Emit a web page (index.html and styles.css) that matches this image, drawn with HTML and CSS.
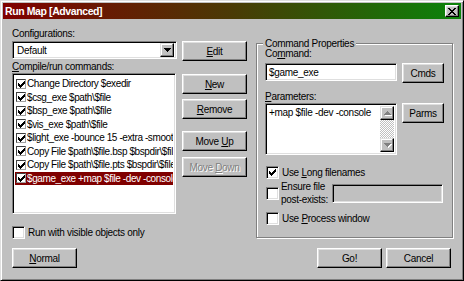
FILE: index.html
```html
<!DOCTYPE html>
<html lang="en">
<head>
    <meta charset="UTF-8">
    <title>Run Map [Advanced]</title>
    <link rel="stylesheet" href="styles.css">
</head>
<body>
    <div class="window">
        <div class="titlebar">
            <span class="title">Run Map [Advanced]</span>
            <button class="close-btn" aria-label="Close">
                <svg width="8" height="7" viewBox="0 0 8 7"><path d="M0 0h2v1H0z M6 0h2v1H6z M1 1h2v1H1z M5 1h2v1H5z M2 2h4v1H2z M3 3h2v1H3z M2 4h4v1H2z M1 5h2v1H1z M5 5h2v1H5z M0 6h2v1H0z M6 6h2v1H6z"/></svg>
            </button>
        </div>

        <div class="main">
            <div class="left-col">
                <div class="label cfg-label">Configurations:</div>
                <div class="cfg-row">
                    <div class="combo sunken">
                        <span class="combo-text">Default</span>
                        <span class="combo-btn">
                            <svg width="7" height="4" viewBox="0 0 7 4"><path d="M0 0h7v1H0z M1 1h5v1H1z M2 2h3v1H2z M3 3h1v1H3z"/></svg>
                        </span>
                    </div>
                    <button class="btn"><u>E</u>dit</button>
                </div>

                <div class="label list-label"><u>C</u>ompile/run commands:</div>
                <div class="list-row">
                    <div class="listbox sunken">
                        <div class="item"><span class="lcheck"></span><span class="item-text">Change Directory $exedir</span></div>
                        <div class="item"><span class="lcheck"></span><span class="item-text">$csg_exe $path\$file</span></div>
                        <div class="item"><span class="lcheck"></span><span class="item-text">$bsp_exe $path\$file</span></div>
                        <div class="item"><span class="lcheck"></span><span class="item-text">$vis_exe $path\$file</span></div>
                        <div class="item"><span class="lcheck"></span><span class="item-text">$light_exe -bounce 15 -extra -smooth</span></div>
                        <div class="item"><span class="lcheck"></span><span class="item-text">Copy File $path\$file.bsp $bspdir\$file.bsp</span></div>
                        <div class="item"><span class="lcheck"></span><span class="item-text">Copy File $path\$file.pts $bspdir\$file.pts</span></div>
                        <div class="item selected"><span class="lcheck"></span><span class="item-text">$game_exe +map $file -dev -console</span></div>
                    </div>
                    <div class="btn-col">
                        <button class="btn"><u>N</u>ew</button>
                        <button class="btn btn-remove"><u>R</u>emove</button>
                        <button class="btn btn-up">Move <u>U</u>p</button>
                        <button class="btn btn-down" disabled>Move <u>D</u>own</button>
                    </div>
                </div>

                <div class="check-row visible-row">
                    <span class="checkbox sunken"></span>
                    <span>Run with visible objects only</span>
                </div>
            </div>

            <fieldset class="group">
                <legend>Command Properties</legend>

                <div class="label cmd-label">Co<u>m</u>mand:</div>
                <div class="field-row">
                    <div class="textbox sunken cmd-box">$game_exe</div>
                    <button class="btn btn-small">Cmds</button>
                </div>

                <div class="label parm-label"><u>P</u>arameters:</div>
                <div class="field-row">
                    <div class="textarea sunken">
                        <div class="textarea-text">+map $file -dev -console</div>
                        <div class="scrollbar">
                            <span class="scroll-btn">
                                <svg width="7" height="4" viewBox="0 0 7 4"><path d="M3 0h1v1H3z M2 1h3v1H2z M1 2h5v1H1z M0 3h7v1H0z"/></svg>
                            </span>
                            <span class="scroll-track"></span>
                            <span class="scroll-btn">
                                <svg width="7" height="4" viewBox="0 0 7 4"><path d="M0 0h7v1H0z M1 1h5v1H1z M2 2h3v1H2z M3 3h1v1H3z"/></svg>
                            </span>
                        </div>
                    </div>
                    <button class="btn btn-small">Parms</button>
                </div>

                <div class="check-row long-row">
                    <span class="checkbox sunken checked"></span>
                    <span>Use <u>L</u>ong filenames</span>
                </div>

                <div class="check-row ensure-row">
                    <span class="checkbox sunken"></span>
                    <span class="ensure-text">Ensure file<br>post-exists:</span>
                    <div class="textbox sunken ensure-box"></div>
                </div>

                <div class="check-row process-row">
                    <span class="checkbox sunken"></span>
                    <span>Use <u>P</u>rocess window</span>
                </div>
            </fieldset>
        </div>

        <div class="footer">
            <button class="btn"><u>N</u>ormal</button>
            <div class="footer-right">
                <button class="btn">Go!</button>
                <button class="btn">Cancel</button>
            </div>
        </div>
    </div>
</body>
</html>
```

FILE: styles.css
```css
* {
    box-sizing: border-box;
}

body {
    margin: 0;
    background: #c0c0c0;
    font-family: "Liberation Sans", Arial, sans-serif;
    font-size: 10px;
    letter-spacing: -0.3px;
    color: #000;
}

u {
    text-underline-offset: 1px;
}

/* window frame */
.window {
    width: 464px;
    height: 281px;
    background: #c0c0c0;
    border: 1px solid;
    border-color: #dfdfdf #000 #000 #dfdfdf;
    box-shadow: inset 1px 1px #fff, inset -1px -1px #808080;
    padding: 2px;
    display: flex;
    flex-direction: column;
}

.titlebar {
    height: 16px;
    background: linear-gradient(to right, #800000, #4a3a05 50%, #0a840a);
    display: flex;
    align-items: center;
    justify-content: space-between;
    padding: 0 2px;
}

.title {
    color: #fff;
    font-weight: bold;
    font-size: 10.5px;
    letter-spacing: -0.4px;
}

.close-btn {
    width: 14px;
    height: 12px;
    padding: 0;
    background: #c0c0c0;
    border: 1px solid;
    border-color: #fff #000 #000 #fff;
    box-shadow: inset -1px -1px #808080, inset 1px 1px #dfdfdf;
    display: flex;
    align-items: center;
    justify-content: center;
}

/* shared control looks */
.sunken {
    background: #fff;
    border: 1px solid;
    border-color: #808080 #fff #fff #808080;
    box-shadow: inset 1px 1px #000, inset -1px -1px #dfdfdf;
}

.btn {
    width: 65px;
    height: 20px;
    padding: 0;
    font: inherit;
    letter-spacing: inherit;
    color: #000;
    background: #c0c0c0;
    border: 1px solid;
    border-color: #fff #000 #000 #fff;
    box-shadow: inset -1px -1px #808080, inset 1px 1px #dfdfdf;
}

.btn:disabled {
    color: #808080;
    text-shadow: 1px 1px #fff;
}

.label {
    line-height: 12px;
    white-space: nowrap;
}

/* main area */
.main {
    display: flex;
    align-items: flex-start;
    gap: 9px;
    padding: 8px 0 0 9px;
}

.left-col {
    width: 235px;
}

.cfg-label {
    line-height: 14px;
}

.cfg-row {
    display: flex;
    gap: 5px;
}

.combo {
    width: 165px;
    height: 18px;
    display: flex;
    align-items: center;
    justify-content: space-between;
    padding: 2px;
}

.combo-text {
    padding-left: 2px;
}

.combo-btn {
    width: 14px;
    height: 14px;
    background: #c0c0c0;
    border: 1px solid;
    border-color: #dfdfdf #000 #000 #dfdfdf;
    box-shadow: inset -1px -1px #808080, inset 1px 1px #fff;
    display: flex;
    align-items: center;
    justify-content: center;
}

.list-row {
    display: flex;
    gap: 6px;
}

.listbox {
    width: 164px;
    height: 141px;
    padding: 3px 2px 2px 2px;
    overflow: hidden;
    letter-spacing: -0.4px;
}

.item {
    height: 13.5px;
    display: flex;
    align-items: center;
    white-space: nowrap;
    padding-left: 1px;
}

.item-text {
    flex: 1;
    min-width: 0;
    overflow: hidden;
}

.item.selected {
    background: #800000;
    color: #fff;
}

.lcheck {
    flex: none;
    width: 10px;
    height: 10px;
    margin-right: 1px;
    background: #fff url("data:image/svg+xml,%3Csvg xmlns='http://www.w3.org/2000/svg' width='7' height='7'%3E%3Cpath d='M6 0h1v1H6z M5 1h2v1H5z M0 2h1v1H0z M4 2h3v1H4z M0 3h2v1H0z M3 3h3v1H3z M0 4h5v1H0z M1 5h3v1H1z M2 6h1v1H2z'/%3E%3C/svg%3E") no-repeat 1px 1px;
    border: 1px solid;
    border-color: #404040 #a0a0a0 #a0a0a0 #404040;
}

.btn-col {
    display: flex;
    flex-direction: column;
    padding-top: 1px;
}

.btn-remove {
    margin-top: 5px;
}

.btn-up {
    margin-top: 12px;
}

.btn-down {
    margin-top: 6px;
}

/* check boxes */
.check-row {
    display: flex;
    align-items: center;
    gap: 3px;
    white-space: nowrap;
}

.checkbox {
    flex: none;
    width: 13px;
    height: 13px;
}

.checkbox.checked {
    background: #fff url("data:image/svg+xml,%3Csvg xmlns='http://www.w3.org/2000/svg' width='7' height='7'%3E%3Cpath d='M6 0h1v1H6z M5 1h2v1H5z M0 2h1v1H0z M4 2h3v1H4z M0 3h2v1H0z M3 3h3v1H3z M0 4h5v1H0z M1 5h3v1H1z M2 6h1v1H2z'/%3E%3C/svg%3E") no-repeat 2px 2px;
}

.visible-row {
    margin-top: 12px;
    height: 13px;
}

/* group box */
.group {
    width: 197px;
    margin: 11px 0 0 0;
    padding: 0 8px 12px 8px;
    border: 1px solid #808080;
    box-shadow: inset 1px 1px #fff, 1px 1px #fff;
    min-inline-size: 0;
}

.group legend {
    margin-left: -2px;
    padding: 0 2px;
    line-height: 11px;
    background: #c0c0c0;
}

.cmd-label {
    margin-top: -1px;
}

.field-row {
    display: flex;
    align-items: flex-start;
    gap: 5px;
}

.cmd-label + .field-row {
    margin-top: 3px;
}

.textbox {
    height: 18px;
    line-height: 14px;
    padding: 2px 3px;
    white-space: nowrap;
}

.cmd-box {
    width: 132px;
}

.btn-small {
    width: 42px;
}

.parm-label {
    margin-top: 8px;
}

.textarea {
    width: 132px;
    height: 52px;
    padding: 2px;
    display: flex;
}

.textarea-text {
    flex: 1;
    padding: 0 1px;
    line-height: 13px;
    white-space: nowrap;
    overflow: hidden;
}

.scrollbar {
    width: 14px;
    display: flex;
    flex-direction: column;
}

.scroll-btn {
    height: 14px;
    background: #c0c0c0;
    border: 1px solid;
    border-color: #dfdfdf #000 #000 #dfdfdf;
    box-shadow: inset -1px -1px #808080, inset 1px 1px #fff;
    display: flex;
    align-items: center;
    justify-content: center;
}

.scroll-btn svg {
    fill: #808080;
    filter: drop-shadow(1px 1px 0 #fff);
}

.scroll-track {
    flex: 1;
    background: repeating-conic-gradient(#c0c0c0 0 25%, #fff 0 50%) 0 0 / 2px 2px;
}

.long-row {
    margin: 11px 0 0 1px;
}

.ensure-row {
    margin: 1px 0 0 1px;
    gap: 2px;
}

.ensure-text {
    width: 49px;
    line-height: 13px;
}

.ensure-box {
    width: 111px;
    height: 19px;
    background: #c0c0c0;
}

.process-row {
    margin: 6px 0 0 1px;
}

/* bottom buttons */
.footer {
    display: flex;
    justify-content: space-between;
    padding: 0 10px 0 9px;
    margin-top: 9px;
}

.footer-right {
    display: flex;
    gap: 4px;
}
```
